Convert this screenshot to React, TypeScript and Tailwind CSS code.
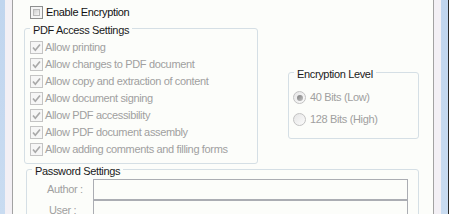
import React from "react";

const font = { fontFamily: '"Liberation Sans", Arial, sans-serif' };

function Check({ checked, disabled }: { checked?: boolean; disabled?: boolean }) {
  if (disabled) {
    return (
      <div className="w-[13px] h-[13px] shrink-0 border border-[#c4c4c4] bg-[#f6f6f6] flex items-center justify-center">
        {checked && (
          <svg width="11" height="11" viewBox="0 0 11 11">
            <path d="M2 5.5 L4.3 8.2 L9 2.5" fill="none" stroke="#a9a9a9" strokeWidth="1.7" />
          </svg>
        )}
      </div>
    );
  }
  return (
    <div className="w-[13px] h-[13px] shrink-0 border border-[#8e8f8f] bg-[#f4f4f4] p-[2px]">
      <div className="w-full h-full border border-[#b9b9b9] bg-gradient-to-br from-[#cfcfcf] to-[#f6f6f6]" />
    </div>
  );
}

function Radio({ checked }: { checked?: boolean }) {
  return (
    <div className="w-[13px] h-[13px] shrink-0 rounded-full border border-[#c2c2c2] bg-gradient-to-br from-[#e6e6e6] to-[#fbfbfb] flex items-center justify-center">
      {checked && <div className="w-[6px] h-[6px] rounded-full bg-gradient-to-br from-[#7d7d7d] to-[#c4c4c4]" />}
    </div>
  );
}

function Legend({ children }: { children: React.ReactNode }) {
  return (
    <legend className="ml-[5px] px-[3px] pt-[2px] leading-[14px] text-[11px] text-[#1a1a1a] tracking-[-0.35px]">
      {children}
    </legend>
  );
}

const perms = [
  "Allow printing",
  "Allow changes to PDF document",
  "Allow copy and extraction of content",
  "Allow document signing",
  "Allow PDF accessibility",
  "Allow PDF document assembly",
  "Allow adding comments and filling forms",
];

export default function App() {
  return (
    <div className="flex w-[449px] h-[214px] overflow-hidden" style={font}>
      <div className="w-[5px] bg-gradient-to-b from-[#c0d5ee] to-[#c9dcf1]" />
      <div className="w-[7px] bg-[#f3f0f5]" />
      <div className="w-[1px] bg-[#a2a2a2]" />
      <div className="flex-1 bg-[#fcfdfa] flex flex-col pt-[4px] text-[11px] tracking-[-0.35px]">
        <div className="flex items-center h-[17px] pl-[17px] gap-[3px] text-[#111]">
          <Check />
          <span>Enable Encryption</span>
        </div>
        <div className="flex items-start">
          <fieldset className="ml-[11px] w-[234px] border border-[#d5dfe5] rounded-[3px] pb-[5px]">
            <Legend>PDF Access Settings</Legend>
            <div className="pt-[2px] pl-[5px] flex flex-col">
              {perms.map((p) => (
                <div key={p} className="flex items-center h-[17px] gap-[2px] text-[#a0a0a0]">
                  <Check checked disabled />
                  <span className="whitespace-nowrap">{p}</span>
                </div>
              ))}
            </div>
          </fieldset>
          <fieldset className="ml-[30px] mt-[44px] w-[131px] border border-[#d5dfe5] rounded-[3px] pb-[7px]">
            <Legend>Encryption Level</Legend>
            <div className="pt-[6px] pl-[4px] flex flex-col text-[#a0a0a0]">
              <div className="flex items-center h-[22px] gap-[4px]">
                <Radio checked />
                <span>40 Bits (Low)</span>
              </div>
              <div className="flex items-center h-[22px] gap-[4px]">
                <Radio />
                <span>128 Bits (High)</span>
              </div>
            </div>
          </fieldset>
        </div>
        <fieldset className="ml-[13px] -mt-[2px] w-[393px] border border-[#d5dfe5] rounded-[3px] pb-[8px]">
          <Legend>Password Settings</Legend>
          <div className="pt-[1px] pr-[10px] flex flex-col text-[#a0a0a0]">
            <div className="flex items-center h-[21px]">
              <div className="w-[66px] shrink-0 pl-[20px]">Author :</div>
              <div className="flex-1 h-[21px] border border-[#abadb3] bg-[#fcfdfa]" />
            </div>
            <div className="flex items-center h-[21px]">
              <div className="w-[66px] shrink-0 pl-[22px]">User :</div>
              <div className="flex-1 h-[21px] border border-[#abadb3] bg-[#fcfdfa]" />
            </div>
          </div>
        </fieldset>
      </div>
      <div className="w-[1px] bg-[#a2a2a2]" />
      <div className="w-[7px] bg-[#f3f0f5]" />
      <div className="w-[7px] bg-gradient-to-b from-[#c0d5ee] to-[#c9dcf1]" />
      <div className="w-[1px] bg-[#2a2a2a]" />
    </div>
  );
}
